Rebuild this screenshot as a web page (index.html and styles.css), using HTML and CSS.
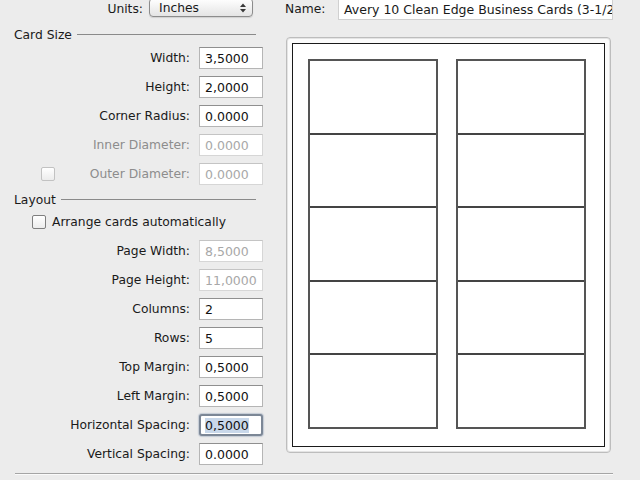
FILE: index.html
```html
<!DOCTYPE html>
<html>
<head>
<meta charset="utf-8">
<link rel="stylesheet" href="styles.css">
</head>
<body>
<div class="window">
  <div class="main">
    <div class="left">
      <div class="units-row">
        <span class="units-label">Units:</span>
        <div class="popup">
          <span>Inches</span>
          <svg class="arrows" width="10" height="12" viewBox="0 0 10 12"><path d="M2 5 L5 1.5 L8 5 Z M2 7 L5 10.5 L8 7 Z" fill="#3a3a3a"/></svg>
        </div>
      </div>

      <div class="section-head first"><span>Card Size</span><i class="rule"></i></div>
      <div class="form">
        <label>Width:</label><div class="field">3,5000</div>
        <label>Height:</label><div class="field">2,0000</div>
        <label>Corner Radius:</label><div class="field">0.0000</div>
        <label class="dis">Inner Diameter:</label><div class="field dis">0.0000</div>
        <label class="dis withbox"><span class="cb dis"></span><span>Outer Diameter:</span></label><div class="field dis">0.0000</div>
      </div>

      <div class="section-head second"><span>Layout</span><i class="rule"></i></div>
      <div class="check-row"><span class="cb"></span><span>Arrange cards automatically</span></div>
      <div class="form form2">
        <label>Page Width:</label><div class="field dis">8,5000</div>
        <label>Page Height:</label><div class="field dis">11,0000</div>
        <label>Columns:</label><div class="field">2</div>
        <label>Rows:</label><div class="field">5</div>
        <label>Top Margin:</label><div class="field">0,5000</div>
        <label>Left Margin:</label><div class="field">0,5000</div>
        <label>Horizontal Spacing:</label><div class="field focus"><span class="sel">0,5000</span></div>
        <label>Vertical Spacing:</label><div class="field">0.0000</div>
      </div>
    </div>

    <div class="right">
      <div class="name-row">
        <span class="name-label">Name:</span>
        <div class="name-field">Avery 10 Clean Edge Business Cards (3-1/2</div>
      </div>
      <div class="preview">
        <div class="page">
          <div class="col"><div class="card"></div><div class="card"></div><div class="card"></div><div class="card"></div><div class="card"></div></div>
          <div class="col"><div class="card"></div><div class="card"></div><div class="card"></div><div class="card"></div><div class="card"></div></div>
        </div>
      </div>
    </div>
    <div class="edge"></div>
  </div>
  <div class="separator"></div>
</div>
</body>
</html>
```

FILE: styles.css
```css
html, body {
  margin: 0;
  padding: 0;
  background: #ececec;
}
body {
  width: 640px;
  height: 480px;
  overflow: hidden;
  font-family: "DejaVu Sans", "Noto Sans", sans-serif;
  font-size: 12.3px;
  color: #1a1a1a;
}
.window {
  width: 640px;
  height: 480px;
  display: flex;
  flex-direction: column;
}
.main {
  display: flex;
  height: 470px;
}
.left {
  width: 270px;
  flex: none;
}
.units-row {
  display: flex;
  align-items: center;
  height: 17px;
}
.units-label {
  width: 143px;
  text-align: right;
}
.popup {
  margin-left: 6px;
  width: 89px;
  height: 17px;
  border: 1px solid #8c8c8c;
  border-radius: 4px;
  background: linear-gradient(#ffffff, #e4e4e4);
  display: flex;
  align-items: center;
  justify-content: space-between;
  padding-left: 9px;
  padding-right: 4px;
  margin-top: -2px;
  box-shadow: 0 1px 1px rgba(0,0,0,0.12);
}
.arrows { display: block; }

.section-head {
  display: flex;
  align-items: center;
  height: 16px;
  padding-left: 14px;
  width: 242px;
}
.section-head.first { margin-top: 10px; margin-bottom: 4px; }
.section-head.second { margin-top: 7px; margin-bottom: 6px; }
.section-head .rule {
  flex: 1;
  height: 0;
  border-top: 1px solid #8a8a8a;
  margin-left: 5px;
  margin-top: -1px;
}

.form {
  display: grid;
  grid-template-columns: 190px 64px;
  grid-auto-rows: 22px;
  column-gap: 9px;
  row-gap: 7px;
}
.form2 { margin-top: 10px; }
.form label {
  display: flex;
  align-items: center;
  justify-content: flex-end;
}
.form label.dis { color: #8d8d8d; }
.form label.withbox { justify-content: space-between; }
.form label.withbox .cb { margin-left: 41px; }

.field {
  box-sizing: border-box;
  background: #fff;
  border: 1px solid #b5b5b5;
  border-top-color: #8f8f8f;
  padding-left: 5px;
  display: flex;
  align-items: center;
  font-size: 12.5px;
  color: #111;
}
.field.dis {
  color: #a8a8a8;
  border-color: #d6d6d6;
  border-top-color: #c4c4c4;
}
.field.focus {
  border: 2px solid #7c8796;
  border-radius: 3px;
  padding-left: 4px;
  box-shadow: 0 0 1px 1px rgba(120,140,170,0.35);
}
.sel { background: #c9d8ea; }

.cb {
  display: inline-block;
  width: 12px;
  height: 12px;
  border: 1px solid #7f7f7f;
  border-radius: 2px;
  background: linear-gradient(#ffffff, #ececec);
  flex: none;
}
.cb.dis { border-color: #c2c2c2; }

.check-row {
  display: flex;
  align-items: center;
  height: 16px;
  padding-left: 32px;
  gap: 6px;
}

.right {
  width: 343px;
  flex: none;
  padding-left: 15px;
}
.name-row {
  display: flex;
  align-items: center;
  height: 17px;
}
.name-label { width: 53px; }
.name-field {
  box-sizing: border-box;
  width: 275px;
  height: 22px;
  margin-top: -2px;
  margin-bottom: -3px;
  background: #fff;
  border: 1px solid #d0d0d0;
  padding-left: 5px;
  display: flex;
  align-items: center;
  white-space: nowrap;
  overflow: hidden;
  font-size: 12.5px;
}

.preview {
  margin-top: 20px;
  margin-left: 1px;
  width: 325px;
  height: 416px;
  box-sizing: border-box;
  border: 1px solid #bdbdbd;
  border-radius: 4px;
  background: #fbfbfb;
  padding: 5px;
  box-shadow: inset 0 0 0 1px #e4e4e4;
}
.page {
  box-sizing: border-box;
  height: 100%;
  border: 1.5px solid #1a1a1a;
  background: #fff;
  display: flex;
  gap: 18px;
  padding: 15px 16px 0 14.5px;
}
.col {
  width: 130px;
  height: 370px;
  box-sizing: border-box;
  border: 2px solid #555;
  display: flex;
  flex-direction: column;
}
.card { flex: 1; }
.card + .card { border-top: 2px solid #444; }

.edge {
  margin-left: 20px;
  width: 7px;
  border-left: 1px solid #d4d4d4;
  background: #f1f1f1;
}

.separator {
  margin-top: 3px;
  margin-left: 15px;
  width: 598px;
  border-top: 1px solid #a5a5a5;
  border-bottom: 1px solid #fafafa;
}
```
